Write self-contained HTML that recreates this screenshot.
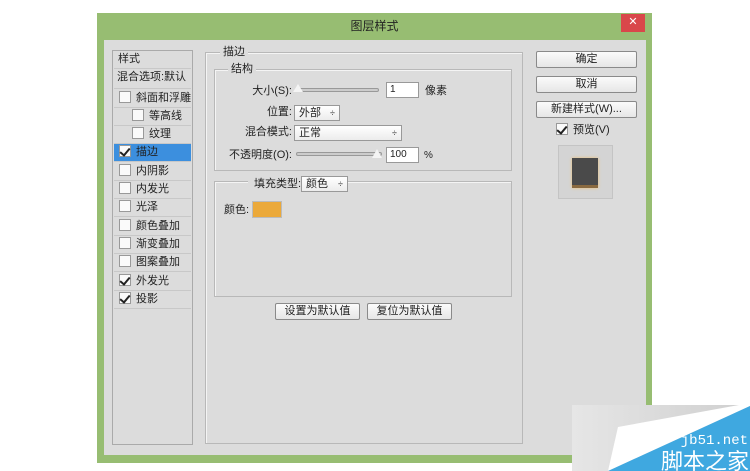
<!DOCTYPE html><html><head><meta charset="utf-8"><style>
*{box-sizing:border-box;margin:0;padding:0}
body{width:750px;height:471px;background:#fff;position:relative;overflow:hidden;font-family:"Liberation Sans","Noto Sans CJK SC",sans-serif;font-size:11px;color:#222}
.a{position:absolute}
.win{left:97px;top:13px;width:555px;height:450px;background:#97bd72}
.inner{left:104px;top:40px;width:542px;height:415px;background:#dcdcdc}
.box{position:absolute;border:1px solid #b8b8b8;box-shadow:inset 1px 1px 0 #f4f4f4}
.li{position:absolute;left:114px;width:77px;height:18px;border-bottom:1px solid #c8c8c8;line-height:17px}
.cb{display:inline-block;width:12px;height:12px;border:1px solid #999;background:#fafafa;vertical-align:-2px;margin-right:5px;position:relative}
.ck:after{content:"";position:absolute;left:2px;top:0;width:4px;height:8px;border:solid #222;border-width:0 2px 2px 0;transform:rotate(40deg)}
.btn{position:absolute;border:1px solid #8a8a8a;background:linear-gradient(#fbfbfb,#e6e6e6);text-align:center;line-height:14px;font-size:11px;border-radius:2px}
.inp{position:absolute;background:#fff;border:1px solid #999;font-size:10px;line-height:14px;padding-left:3px}
.sel{position:absolute;background:linear-gradient(#fff,#ececec);border:1px solid #999;line-height:14px;padding-left:4px;font-size:11px}
.sel:after{content:"÷";position:absolute;right:4px;top:0;font-size:9px}
.lab{position:absolute;text-align:right;line-height:14px}
.slider{position:absolute;height:4px;border:1px solid #999;background:#ccc;border-radius:2px}
</style></head><body>
<div class="a win"></div>
<div class="a" style="left:97px;top:13px;width:555px;height:27px;text-align:center;line-height:26px;font-size:12px;color:#222">图层样式</div>
<div class="a" style="left:621px;top:14px;width:24px;height:18px;background:#d9474a;color:#fff;text-align:center;line-height:17px;font-size:11px">✕</div>
<div class="a inner"></div>
<div class="a" style="left:112px;top:50px;width:81px;height:395px;border:1px solid #aaa;background:#dcdcdc"></div>
<div class="li" style="top:51px;padding-left:4px">样式</div>
<div class="li" style="top:69px;padding-left:3px;height:20px">混合选项:默认</div>
<div class="li" style="top:90px;padding-left:5px"><span class="cb"></span>斜面和浮雕</div>
<div class="li" style="top:108px;padding-left:18px"><span class="cb"></span>等高线</div>
<div class="li" style="top:126px;padding-left:18px"><span class="cb"></span>纹理</div>
<div class="li" style="top:144px;padding-left:5px;background:#3c8fde"><span class="cb ck"></span>描边</div>
<div class="li" style="top:163px;padding-left:5px"><span class="cb"></span>内阴影</div>
<div class="li" style="top:181px;padding-left:5px"><span class="cb"></span>内发光</div>
<div class="li" style="top:199px;padding-left:5px"><span class="cb"></span>光泽</div>
<div class="li" style="top:218px;padding-left:5px"><span class="cb"></span>颜色叠加</div>
<div class="li" style="top:236px;padding-left:5px"><span class="cb"></span>渐变叠加</div>
<div class="li" style="top:254px;padding-left:5px"><span class="cb"></span>图案叠加</div>
<div class="li" style="top:273px;padding-left:5px"><span class="cb ck"></span>外发光</div>
<div class="li" style="top:291px;padding-left:5px"><span class="cb ck"></span>投影</div>
<div class="box" style="left:205px;top:52px;width:318px;height:392px"></div>
<div class="a" style="left:220px;top:45px;background:#dcdcdc;padding:0 3px;line-height:14px">描边</div>
<div class="box" style="left:214px;top:69px;width:298px;height:102px"></div>
<div class="a" style="left:228px;top:62px;background:#dcdcdc;padding:0 3px;line-height:14px">结构</div>
<div class="lab" style="left:220px;top:84px;width:72px">大小(S):</div>
<div class="slider" style="left:296px;top:88px;width:83px"></div>
<div class="a" style="left:293px;top:84px;width:0;height:0;border-left:5px solid transparent;border-right:5px solid transparent;border-bottom:8px solid #f4f4f4"></div>
<div class="inp" style="left:386px;top:82px;width:33px;height:16px">1</div>
<div class="a" style="left:425px;top:84px;line-height:14px">像素</div>
<div class="lab" style="left:220px;top:105px;width:72px">位置:</div>
<div class="sel" style="left:294px;top:105px;width:46px;height:16px">外部</div>
<div class="lab" style="left:220px;top:125px;width:72px">混合模式:</div>
<div class="sel" style="left:294px;top:125px;width:108px;height:16px">正常</div>
<div class="lab" style="left:220px;top:148px;width:72px">不透明度(O):</div>
<div class="slider" style="left:296px;top:152px;width:86px"></div>
<div class="a" style="left:372px;top:149px;width:0;height:0;border-left:5px solid transparent;border-right:5px solid transparent;border-bottom:9px solid #f4f4f4"></div>
<div class="inp" style="left:386px;top:147px;width:33px;height:16px">100</div>
<div class="a" style="left:424px;top:149px;line-height:14px;font-size:10px">%</div>
<div class="box" style="left:214px;top:181px;width:298px;height:116px"></div>
<div class="a" style="left:248px;top:177px;background:#dcdcdc;padding:0 4px 0 6px;line-height:14px">填充类型: </div>
<div class="sel" style="left:301px;top:176px;width:47px;height:16px">颜色</div>
<div class="a" style="left:224px;top:203px;line-height:14px">颜色:</div>
<div class="a" style="left:252px;top:201px;width:30px;height:17px;background:#eba93a;border:1px solid #bbb"></div>
<div class="btn" style="left:275px;top:303px;width:85px;height:17px">设置为默认值</div>
<div class="btn" style="left:367px;top:303px;width:85px;height:17px">复位为默认值</div>
<div class="btn" style="left:536px;top:51px;width:101px;height:17px">确定</div>
<div class="btn" style="left:536px;top:76px;width:101px;height:17px">取消</div>
<div class="btn" style="left:536px;top:101px;width:101px;height:17px">新建样式(W)...</div>
<div class="a" style="left:556px;top:123px;line-height:14px"><span class="cb ck"></span>预览(V)</div>
<div class="a" style="left:558px;top:145px;width:55px;height:54px;border:1px solid #c4c4c4;background:#d4d4d4"></div>
<div class="a" style="left:572px;top:158px;width:26px;height:30px;background:#4a4a4a;box-shadow:0 0 3px #f0c070;border-bottom:3px solid #8a6a40"></div>
<svg class="a" style="left:572px;top:400px" width="178" height="71"><defs><linearGradient id="g" x1="0" x2="1"><stop offset="0" stop-color="#e6e6e6"/><stop offset="1" stop-color="#cfcfcf"/></linearGradient></defs><rect x="0" y="5" width="178" height="66" fill="url(#g)"/><polygon points="46,27 178,3 178,6 36,71" fill="#fff"/><polygon points="178,6 178,71 36,71" fill="#3fa8e0"/><text x="176" y="44" text-anchor="end" fill="#fff" font-family="Liberation Mono" font-size="14">jb51.net</text><text x="177" y="69" text-anchor="end" fill="#fff" font-family="Noto Sans CJK SC" font-size="22">脚本之家</text></svg>
</body></html>
